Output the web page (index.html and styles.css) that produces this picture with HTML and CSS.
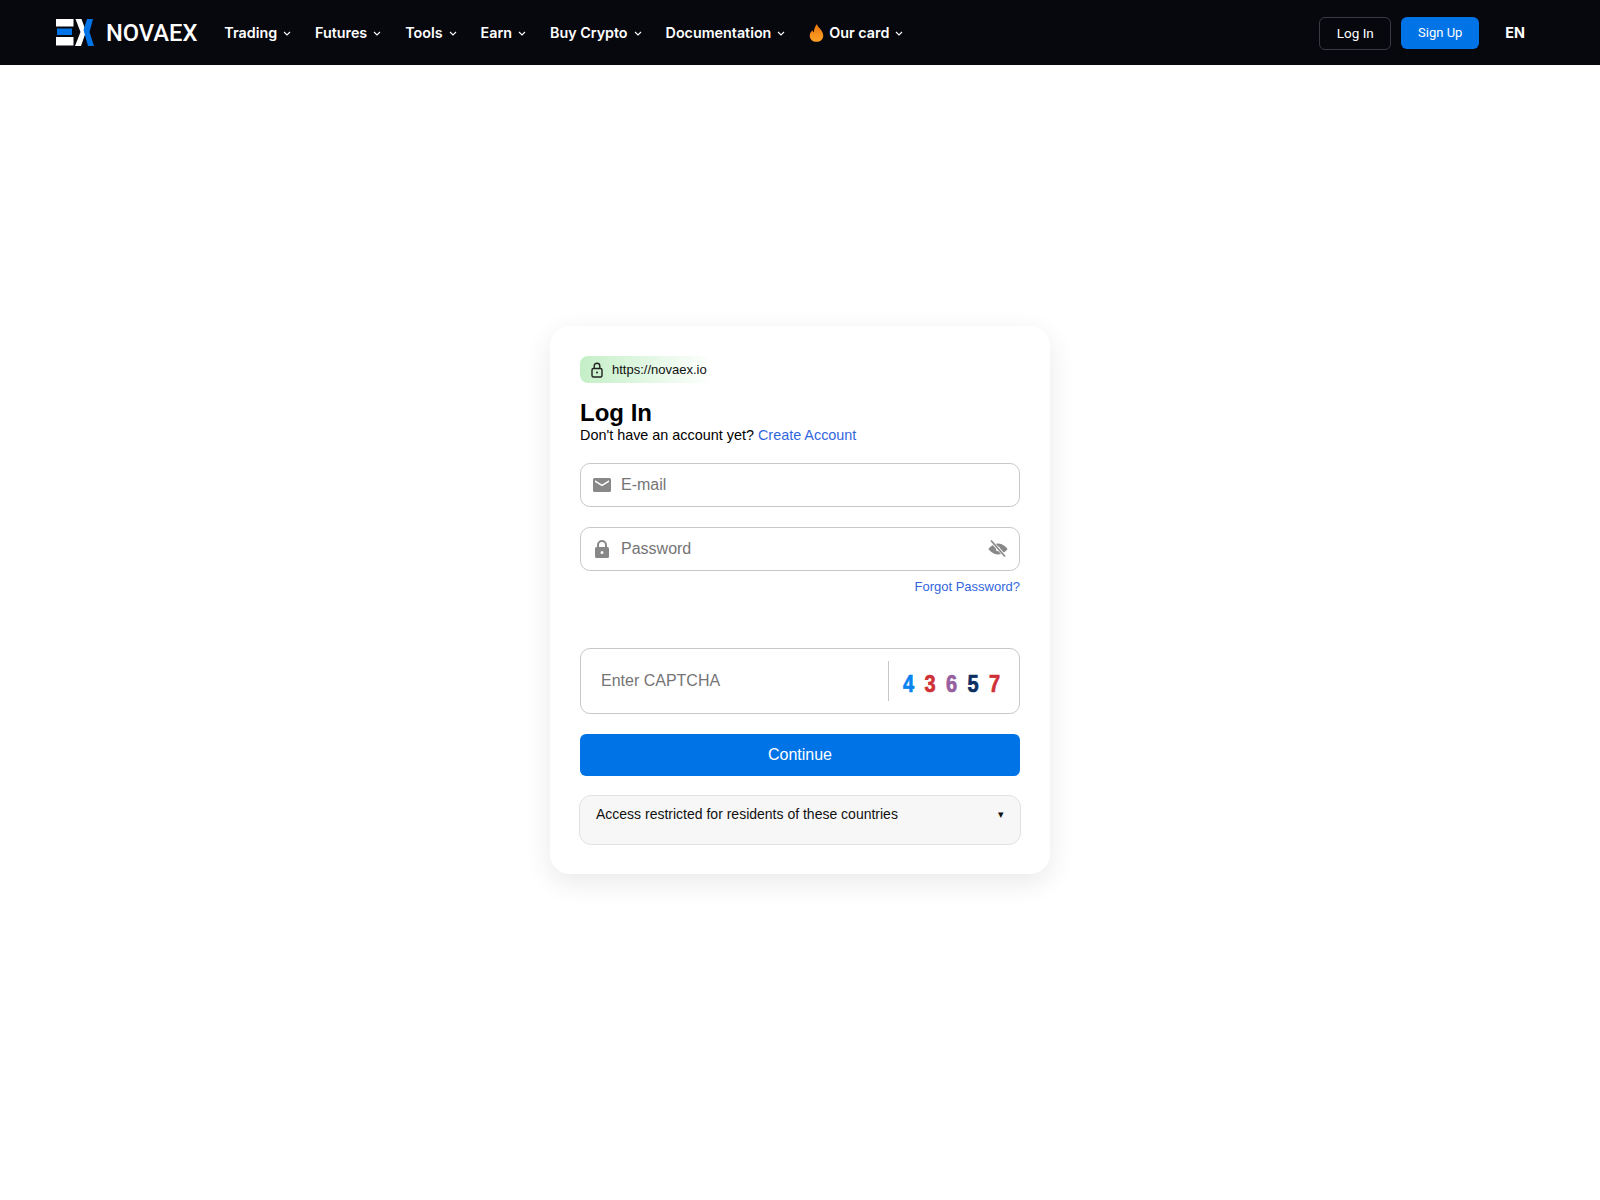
FILE: index.html
```html
<!DOCTYPE html>
<html lang="en">
<head>
    <meta charset="UTF-8">
    <meta name="viewport" content="width=device-width, initial-scale=1.0">
    <title>NovaEx - Log In</title>
    <link rel="stylesheet" href="styles.css">
</head>
<body>
    <header class="topbar">
        <a class="brand" href="#">
            <svg class="brand-mark" viewBox="0 0 38 27" width="38" height="27">
                <rect x="0" y="0" width="17.500" height="7.500" fill="#fff"/>
                <rect x="1" y="9.500" width="15" height="6.500" fill="#0073e6"/>
                <rect x="0" y="18" width="17.500" height="8.500" fill="#fff"/>
                <polygon points="19.500,0 25.500,0 30,12.500 25,27 19,27 24.500,13" fill="#fff"/>
                <polygon points="37,0 31,0 27.500,11 32,27 38,27 33.500,13" fill="#0073e6"/>
            </svg>
            <span class="brand-name">NOVAEX</span>
        </a>
        <nav class="nav">
            <a class="nav-item" href="#">Trading<svg class="caret" viewBox="0 0 8 5"><path d="M1 1l3 3 3-3"/></svg></a>
            <a class="nav-item" href="#">Futures<svg class="caret" viewBox="0 0 8 5"><path d="M1 1l3 3 3-3"/></svg></a>
            <a class="nav-item" href="#">Tools<svg class="caret" viewBox="0 0 8 5"><path d="M1 1l3 3 3-3"/></svg></a>
            <a class="nav-item" href="#">Earn<svg class="caret" viewBox="0 0 8 5"><path d="M1 1l3 3 3-3"/></svg></a>
            <a class="nav-item" href="#">Buy Crypto<svg class="caret" viewBox="0 0 8 5"><path d="M1 1l3 3 3-3"/></svg></a>
            <a class="nav-item" href="#">Documentation<svg class="caret" viewBox="0 0 8 5"><path d="M1 1l3 3 3-3"/></svg></a>
            <a class="nav-item nav-card" href="#">
                <svg class="flame" viewBox="0 0 16 20" width="15" height="18">
                    <defs>
                        <linearGradient id="flameFill" x1="0" y1="0" x2="0" y2="1">
                            <stop offset="0" stop-color="#e8760c"/>
                            <stop offset="1" stop-color="#ffa126"/>
                        </linearGradient>
                    </defs>
                    <path d="M8.500 0C9 3.500 15.500 7 15.500 13 15.500 17 12 19.800 8 19.800S.5 17 .5 13C.5 10 2.400 8.200 3.500 7c.2 1.200.7 2 1.500 2.500C5 6 6.500 2.500 8.500 0z" fill="url(#flameFill)"/>
                </svg>
                Our card<svg class="caret" viewBox="0 0 8 5"><path d="M1 1l3 3 3-3"/></svg>
            </a>
        </nav>
        <div class="actions">
            <a class="btn btn-outline" href="#">Log In</a>
            <a class="btn btn-primary" href="#">Sign Up</a>
            <span class="lang">EN</span>
        </div>
    </header>

    <main class="page">
        <div class="card">
            <div class="url-badge">
                <svg viewBox="0 0 14 16" width="14" height="16" fill="none" stroke="#222" stroke-width="1.4">
                    <rect x="2" y="6.500" width="10" height="8.500" rx="1.500"/>
                    <path d="M4.200 6.500V4a2.800 2.800 0 0 1 5.600 0v2.500"/>
                    <circle cx="7" cy="10.500" r="1" fill="#222" stroke="none"/>
                </svg>
                <span>https://novaex.io</span>
            </div>

            <h1 class="title">Log In</h1>
            <p class="subtitle">Don't have an account yet? <a href="#">Create Account</a></p>

            <div class="field">
                <svg class="field-icon" viewBox="0 0 18 14" width="18" height="14">
                    <path d="M1.500 0h15A1.500 1.500 0 0 1 18 1.500v11a1.500 1.500 0 0 1-1.500 1.500h-15A1.500 1.500 0 0 1 0 12.500v-11A1.500 1.500 0 0 1 1.500 0zM9 6.500L2 2.200v1.700l7 4.300 7-4.300V2.200z" fill="#888" fill-rule="evenodd"/>
                </svg>
                <input class="field-input" type="text" placeholder="E-mail">
            </div>

            <div class="field field-password">
                <svg class="field-icon" viewBox="0 0 14 18" width="14" height="18">
                    <path d="M2 7V5a5 5 0 0 1 10 0v2h.5A1.500 1.500 0 0 1 14 8.500v8a1.500 1.500 0 0 1-1.500 1.500h-11A1.500 1.500 0 0 1 0 16.500v-8A1.500 1.500 0 0 1 1.500 7zm2 0h6V5a3 3 0 0 0-6 0zm3 4a1.500 1.500 0 1 0 0 3 1.500 1.500 0 0 0 0-3z" fill="#888" fill-rule="evenodd"/>
                </svg>
                <input class="field-input" type="password" placeholder="Password">
                <svg class="eye" viewBox="0 0 20 18" width="20" height="18">
                    <path d="M10 3.500c4.500 0 8 3.200 9.500 5.500-1.500 2.300-5 5.500-9.500 5.500S2 11.300.5 9C2 6.700 5.500 3.500 10 3.500z" fill="#888"/>
                    <circle cx="10" cy="9" r="2.200" fill="#fff"/>
                    <path d="M3 1l14 15" stroke="#fff" stroke-width="3.200"/>
                    <path d="M3 .5l14 16" stroke="#888" stroke-width="1.600"/>
                </svg>
            </div>
            <div class="forgot"><a href="#">Forgot Password?</a></div>

            <div class="captcha">
                <input class="captcha-input" type="text" placeholder="Enter CAPTCHA">
                <div class="captcha-code">
                    <span class="digit digit-blue">4</span>
                    <span class="digit digit-red">3</span>
                    <span class="digit digit-purple">6</span>
                    <span class="digit digit-navy">5</span>
                    <span class="digit digit-red">7</span>
                </div>
            </div>

            <button class="continue">Continue</button>

            <div class="restricted">
                <span>Access restricted for residents of these countries</span>
                <span class="restricted-arrow">▾</span>
            </div>
        </div>
    </main>
</body>
</html>
```

FILE: styles.css
```css
* {
    box-sizing: border-box;
}
body {
    margin: 0;
    background: #fff;
    font-family: "Liberation Sans", Arial, sans-serif;
    color: #000;
}
a {
    text-decoration: none;
}
.topbar {
    height: 65px;
    background: #07070e;
    display: flex;
    align-items: center;
    padding: 0 75px 0 56px;
    font-family: Inter, "Liberation Sans", sans-serif;
}
.brand {
    display: flex;
    align-items: center;
    gap: 12px;
    color: #fff;
}
.brand-mark {
    display: block;
}
.brand-name {
    font-family: Roboto, sans-serif;
    font-size: 23.700px;
    font-weight: 500;
}
.nav {
    display: flex;
    align-items: center;
    margin-left: 27px;
    gap: 24px;
}
.nav-item {
    display: flex;
    align-items: center;
    color: #fff;
    font-size: 14.300px;
    font-weight: 600;
    white-space: nowrap;
}
.caret {
    width: 8px;
    height: 5px;
    margin-left: 6px;
    margin-top: 1px;
    fill: none;
    stroke: #fff;
    stroke-width: 1.100;
}
.flame {
    margin-right: 5px;
}
.actions {
    margin-left: auto;
    display: flex;
    align-items: center;
}
.btn {
    display: flex;
    align-items: center;
    justify-content: center;
    border-radius: 6px;
    font-family: Roboto, sans-serif;
    font-size: 13.500px;
    color: #fff;
}
.btn-outline {
    width: 72px;
    height: 33px;
    border: 1px solid #3a3a42;
    margin-top: 1px;
}
.btn-primary {
    width: 78px;
    height: 32px;
    background: #0073e6;
    margin-left: 10px;
    font-size: 13px;
}
.lang {
    margin-left: 26px;
    font-size: 14.400px;
    font-weight: 700;
    color: #fff;
}
.page {
    display: flex;
    justify-content: center;
    min-height: 1135px;
    padding-top: 261px;
}
.card {
    width: 500px;
    height: 548px;
    background: #fff;
    border-radius: 20px;
    padding: 30px;
    box-shadow: 0 8px 28px rgba(0, 0, 0, 0.09);
}
.url-badge {
    display: flex;
    align-items: center;
    gap: 8px;
    width: 132px;
    height: 27px;
    padding-left: 10px;
    border-radius: 8px;
    background: linear-gradient(90deg, #c4efc7, #ffffff);
    font-size: 13px;
    color: #111;
}
.title {
    margin: 15px 0 0;
    font-size: 24px;
    line-height: 29px;
    font-weight: 700;
}
.subtitle {
    margin: 0;
    font-size: 14.400px;
    line-height: 16px;
}
.subtitle a,
.forgot a {
    color: #3366dd;
}
.field {
    display: flex;
    align-items: center;
    height: 44px;
    margin-top: 20px;
    padding: 0 11px 0 12px;
    border: 1px solid #c8c8c8;
    border-radius: 10px;
}
.field-icon {
    flex: 0 0 auto;
}
.field-icon + .field-input {
    margin-left: 8px;
}
.field-password .field-icon {
    margin-left: 2px;
    margin-right: 2px;
}
.field-input,
.captcha-input {
    flex: 1;
    min-width: 0;
    border: none;
    outline: none;
    background: transparent;
    font-family: "Liberation Sans", Arial, sans-serif;
    font-size: 16px;
}
.field-input::placeholder,
.captcha-input::placeholder {
    color: #757575;
    opacity: 1;
}
.eye {
    flex: 0 0 auto;
}
.forgot {
    margin-top: 7px;
    text-align: right;
    font-size: 13px;
    line-height: 17px;
}
.captcha {
    display: flex;
    align-items: center;
    height: 66px;
    margin-top: 53px;
    padding-left: 18px;
    border: 1px solid #c8c8c8;
    border-radius: 10px;
}
.captcha-code {
    flex: 0 0 auto;
    display: flex;
    align-items: center;
    justify-content: space-between;
    width: 131px;
    height: 40px;
    padding: 7px 19px 0 14px;
    border-left: 1px solid #c8c8c8;
}
.digit {
    display: inline-block;
    font-size: 20px;
    font-weight: 700;
    -webkit-text-stroke: 0.6px currentColor;
    transform: scaleY(1.150);
}
.digit-blue {
    color: #0a84f0;
}
.digit-red {
    color: #cf3035;
}
.digit-purple {
    color: #96609f;
}
.digit-navy {
    color: #0b2f63;
}
.continue {
    display: block;
    width: 100%;
    height: 42px;
    margin-top: 20px;
    border: none;
    border-radius: 6px;
    background: #0073e6;
    color: #fff;
    font-family: "Liberation Sans", Arial, sans-serif;
    font-size: 16px;
}
.restricted {
    display: flex;
    justify-content: space-between;
    height: 50px;
    margin: 19px -1px 0;
    padding: 9px 16px 0 16px;
    background: #f7f7f7;
    border: 1px solid #e2e2e2;
    border-radius: 12px;
    font-size: 14px;
    line-height: 18px;
    color: #111;
}
.restricted-arrow {
    font-size: 11px;
}
```
